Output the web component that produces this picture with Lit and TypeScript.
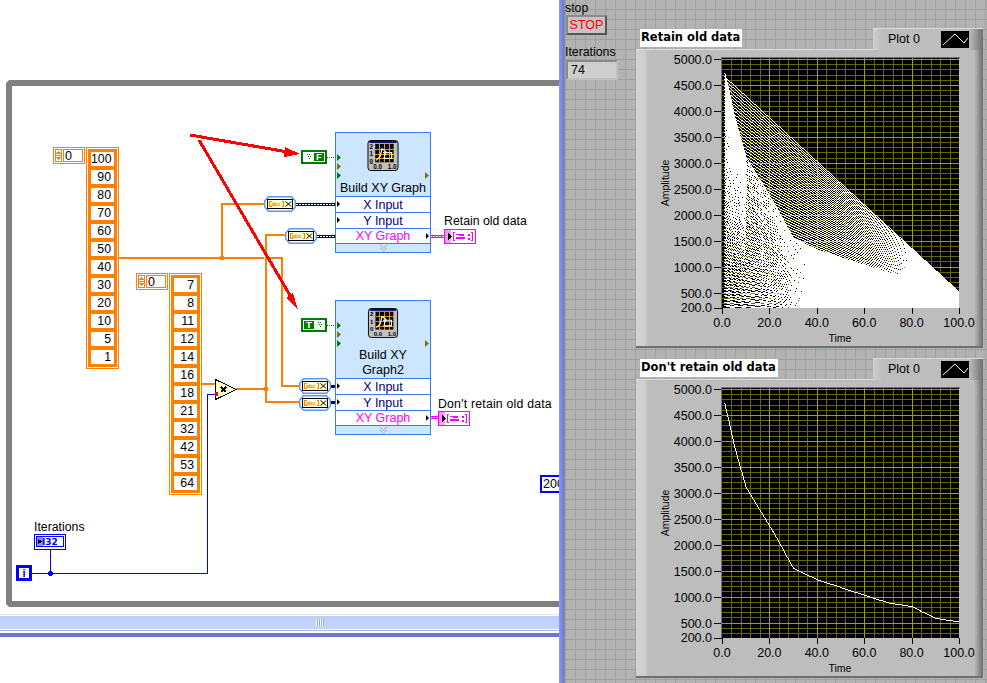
import { LitElement, css, html, svg } from 'lit'
import { customElement, property } from 'lit/decorators.js'

const TIMES = [100, 90, 80, 70, 60, 50, 40, 30, 20, 10, 5, 1]
const FACTORS = [7, 8, 11, 12, 14, 16, 18, 21, 32, 42, 53, 64]
const ITERATIONS = 74
const PLOT_W = 237
const PLOT_H = 250

// y axis runs 5000..200
const px = (x: number) => x * 2.37
const py = (y: number) => 1 + (5000 - y) * 0.0519

const iterationPoints = (i: number) =>
  TIMES.map((t, n): [number, number] => [px(t), py(FACTORS[n] * i)])

// the graph draws aliased one pixel lines, so rasterise them the same way
// and hand over the result as horizontal runs
const rasterTrace = (points: [number, number][]) => {
  const bits = new Uint8Array(PLOT_W * PLOT_H)
  const plot = (x: number, y: number) => {
    if (x >= 0 && x < PLOT_W && y >= 0 && y < PLOT_H) bits[y * PLOT_W + x] = 1
  }
  for (let p = 1; p < points.length; p++) {
    const [x0, y0] = points[p - 1]
    const [x1, y1] = points[p]
    const steps = Math.ceil(Math.max(Math.abs(x1 - x0), Math.abs(y1 - y0))) || 1
    for (let s = 0; s <= steps; s++) {
      plot(Math.round(x0 + (x1 - x0) * s / steps), Math.round(y0 + (y1 - y0) * s / steps))
    }
  }
  let d = ''
  for (let y = 0; y < PLOT_H; y++) {
    let x = 0
    while (x < PLOT_W) {
      if (!bits[y * PLOT_W + x]) { x++; continue }
      const start = x
      while (x < PLOT_W && bits[y * PLOT_W + x]) x++
      d += `M${start} ${y}.5h${x - start}`
    }
  }
  return d
}

const retainedTrace = () => {
  let points: [number, number][] = []
  for (let i = 0; i <= ITERATIONS; i++) points = points.concat(iterationPoints(i))
  return rasterTrace(points)
}

@customElement('array-const')
class ArrayConst extends LitElement {
  @property({ type: Array }) values: number[] = []

  static styles = css`
    :host {
      display: flex;
      align-items: flex-start;
      gap: 1px;
    }
    .index {
      box-sizing: border-box;
      width: 32px;
      height: 17px;
      border: 1px solid #ff8000;
      padding: 1px;
      display: flex;
      background: #fff;
    }
    .spin {
      display: block;
      width: 7px;
      height: 13px;
    }
    .value {
      flex: 1;
      border: 1px solid #ff8000;
      margin-left: 1px;
      font-size: 12.5px;
      line-height: 12px;
      padding-left: 1px;
    }
    .array {
      box-sizing: border-box;
      width: 33px;
      border: 1px solid #ff8000;
      padding: 1px;
      background: #fff;
    }
    .inner {
      background: #ff8000;
      padding: 3px;
      display: flex;
      flex-direction: column;
      gap: 4px;
    }
    .cell {
      height: 14px;
      line-height: 15px;
      background: #fff;
      text-align: right;
      padding-right: 3px;
      font-size: 12.3px;
    }
  `

  render () {
    return html`
      <div class="index">
        <svg class="spin" viewBox="0 0 7 13" shape-rendering="crispEdges">
          <rect x="0" y="0" width="7" height="13" fill="#ff8000"/>
          <rect x="1" y="1" width="5" height="11" fill="#fff"/>
          <path d="M3 2h1v1h1v1h1v1H1V4h1V3h1zM1 8h5v1H5v1H4v1H3v-1H2V9H1z" fill="#ff8000"/>
          <rect x="1" y="6" width="5" height="1" fill="#ff8000"/>
        </svg>
        <div class="value">0</div>
      </div>
      <div class="array">
        <div class="inner">
          ${this.values.map(v => html`<div class="cell">${v}</div>`)}
        </div>
      </div>
    `
  }
}

@customElement('express-vi')
class ExpressVi extends LitElement {
  @property({ type: Array }) titleLines: string[] = []
  @property({ type: Number }) headHeight = 64

  static styles = css`
    :host {
      display: block;
      box-sizing: border-box;
      width: 96px;
      border: 1px solid #3c78f0;
      background: #cce6ff;
      position: relative;
    }
    .head {
      box-sizing: border-box;
      padding-top: 7px;
      display: flex;
      flex-direction: column;
      align-items: center;
    }
    .icon {
      display: block;
      width: 32px;
      height: 32px;
      margin-bottom: 10px;
    }
    .title {
      font-size: 12.5px;
      line-height: 15px;
      text-align: center;
      color: #000;
    }
    .term {
      position: absolute;
      left: 1px;
      width: 4px;
      height: 7px;
      clip-path: polygon(0 0, 100% 50%, 0 100%);
      background: #007a00;
    }
    .term.olive {
      background: #807000;
    }
    .term.out {
      left: auto;
      right: 1px;
    }
    .row {
      box-sizing: border-box;
      height: 16px;
      line-height: 16px;
      border-top: 1px solid #3c78f0;
      background: #fff;
      text-align: center;
      font-size: 12.5px;
      color: #000080;
      position: relative;
    }
    .row.graph {
      height: 15px;
      line-height: 15px;
      color: #ff00ff;
    }
    .row::after {
      content: '';
      position: absolute;
      left: 1px;
      top: 4px;
      width: 3px;
      height: 6px;
      background: #000;
      clip-path: polygon(0 0, 100% 50%, 0 100%);
    }
    .row.graph::after {
      left: auto;
      right: 1px;
    }
    .more {
      height: 8px;
      border-top: 1px solid #3c78f0;
      display: flex;
      justify-content: center;
    }
    .more svg {
      display: block;
      width: 9px;
      height: 8px;
    }
  `

  icon () {
    const grid = [12, 17, 22]
    return html`
      <svg class="icon" viewBox="0 0 32 32">
        <rect x="0.5" y="0.5" width="31" height="31" rx="3" fill="#c0c0c0" stroke="#000"/>
        <path d="M2 1H30V3H2z" fill="#000080"/>
        <rect x="8" y="4" width="19" height="19" fill="#000"/>
        ${grid.map(g => svg`
          <path d="M${g}.5 4V23M8 ${g - 3}.5H27" stroke="#f0a000" shape-rendering="crispEdges"/>
        `)}
        <path d="M9 21L13 17L15 9L19 12L17 19H25V13L16 13" fill="none" stroke="#fff" stroke-width="1.2"/>
        <g font-size="6.5" font-weight="700" fill="#000">
          <text x="2" y="9">2</text>
          <text x="2" y="17">1</text>
          <text x="2" y="25">0</text>
          <text x="6" y="30">0.0</text>
          <text x="21" y="30">1.0</text>
        </g>
      </svg>
    `
  }

  render () {
    // terminal rows sit straight under the icon, output lines up with the last
    const top = 21
    return html`
      <div class="head" style="height:${this.headHeight - 1}px">
        ${this.icon()}
        ${this.titleLines.map(l => html`<div class="title">${l}</div>`)}
      </div>
      <span class="term" style="top:${top}px"></span>
      <span class="term olive" style="top:${top + 9}px"></span>
      <span class="term" style="top:${top + 18}px"></span>
      <span class="term olive out" style="top:${top + 18}px"></span>
      <div class="row">X Input</div>
      <div class="row">Y Input</div>
      <div class="row graph">XY Graph</div>
      <div class="more">
        <svg viewBox="0 0 9 8">
          <path d="M1 1L4.5 4L8 1M1 4L4.5 7L8 4" fill="none" stroke="#a8a8b8"/>
        </svg>
      </div>
    `
  }
}

@customElement('xy-graph')
class XyGraph extends LitElement {
  @property() label = ''
  @property() trace = ''

  static styles = css`
    :host {
      display: block;
      width: 347px;
    }
    .top {
      display: flex;
      justify-content: space-between;
      height: 21px;
      position: relative;
      z-index: 1;
    }
    .label {
      margin: 1px 0 0 4px;
      height: 18px;
      padding: 0 2px 0 1px;
      background: #fff;
      font-family: 'DejaVu Sans', sans-serif;
      font-weight: 700;
      font-size: 11.5px;
      line-height: 17px;
      color: #000;
    }
    .legend {
      box-sizing: border-box;
      width: 110px;
      height: 22px;
      display: flex;
      align-items: center;
      padding: 0 14px 0 15px;
      justify-content: space-between;
      font-size: 12.5px;
      background: linear-gradient(to right, #d0d0d0, #bdbdbd 10px, #bdbdbd 96px, #707070);
      box-shadow: inset 0 1px 0 #dadada;
    }
    .swatch {
      display: block;
      width: 28px;
      height: 17px;
      background: #000;
    }
    .panel {
      height: 299px;
      background: linear-gradient(to right, #d2d2d2, #d0d0d0 8px, #bdbdbd 12px, #bdbdbd 338px, #6c6c6c);
      box-shadow: inset 0 1px 0 #dcdcdc, inset 0 -2px 0 #6f6f6f;
    }
    .chart {
      display: block;
      width: 347px;
      height: 299px;
    }
    .chart text {
      font-size: 12.5px;
      fill: #000;
    }
    .chart text.axis {
      font-size: 10.5px;
    }
    .crisp {
      shape-rendering: crispEdges;
    }
  `

  chart () {
    const yMajor = [5000, 4500, 4000, 3500, 3000, 2500, 2000, 1500, 1000, 500]
    const yMinor = Array.from({ length: 49 }, (_, i) => 200 + i * 100)
    const xMajor = [0, 20, 40, 60, 80, 100]
    const xMinor = Array.from({ length: 25 }, (_, i) => (i + 1) * 4)
    const rowY = (v: number) => Math.round(py(v)) + 0.5
    const colX = (v: number) => Math.round(px(v)) + 0.5
    return html`
      <svg class="chart" viewBox="0 0 347 299">
        <g class="crisp" stroke="#000">
          ${[...yMajor, 200].map(v => svg`<path d="M78 ${rowY(v) + 9}H86"/>`)}
          ${xMajor.map(v => svg`<path d="M${colX(v) + 86} 259V265"/>`)}
        </g>
        ${yMajor.map(v => svg`
          <text x="76" y=${rowY(v) + 13.5} text-anchor="end">${v.toFixed(1)}</text>
        `)}
        <text x="76" y="263" text-anchor="end">200.0</text>
        ${xMajor.map(v => svg`
          <text x=${px(v) + 86} y="277.5" text-anchor="middle">${v.toFixed(1)}</text>
        `)}
        <text class="axis" x="204" y="293" text-anchor="middle">Time</text>
        <text class="axis" transform="translate(33 134) rotate(-90)" text-anchor="middle">Amplitude</text>
        <path class="crisp" d="M85.5 259V8.5H324" fill="none" stroke="#707070"/>
        <svg x="86" y="9" width=${PLOT_W} height=${PLOT_H} viewBox="0 0 ${PLOT_W} ${PLOT_H}">
          <rect width=${PLOT_W} height=${PLOT_H} fill="#000"/>
          <g class="crisp" stroke="#666600">
            ${yMinor.map(v => svg`<path d="M0 ${rowY(v)}H${PLOT_W}"/>`)}
            ${xMinor.map(v => svg`<path d="M${colX(v)} 0V${PLOT_H}"/>`)}
          </g>
          <g class="crisp" stroke="#a0a000">
            ${yMajor.map(v => svg`<path d="M0 ${rowY(v)}H${PLOT_W}"/>`)}
            ${xMajor.slice(1).map(v => svg`<path d="M${colX(v)} 0V${PLOT_H}"/>`)}
          </g>
          <path class="crisp" d=${this.trace} fill="none" stroke="#fff"/>
        </svg>
      </svg>
    `
  }

  render () {
    return html`
      <div class="top">
        <div class="label">${this.label}</div>
        <div class="legend">
          <span>Plot 0</span>
          <svg class="swatch" viewBox="0 0 28 17">
            <polyline points="2,14 14,3 23,12 27,7" fill="none" stroke="#fff"/>
          </svg>
        </div>
      </div>
      <div class="panel">${this.chart()}</div>
    `
  }
}

@customElement('app-root')
class AppRoot extends LitElement {
  static styles = css`
    :host {
      display: flex;
      width: 987px;
      height: 683px;
      overflow: hidden;
      background: #fff;
      font-family: 'Liberation Sans', Arial, sans-serif;
      color: #000;
    }

    /* block diagram */
    .left {
      width: 559px;
      display: flex;
      flex-direction: column;
    }
    .canvas {
      height: 614px;
      position: relative;
      overflow: hidden;
    }
    .canvas > * {
      position: absolute;
    }
    .loop {
      box-sizing: border-box;
      left: 6px;
      top: 80px;
      width: 600px;
      height: 527px;
      border: 6px solid #808080;
      clip-path: polygon(3px 0, 100% 0, 100% 100%, 3px 100%, 0 calc(100% - 3px), 0 3px);
    }
    .layer {
      left: 0;
      top: 0;
      width: 559px;
      height: 614px;
      shape-rendering: crispEdges;
    }
    .arrows {
      pointer-events: none;
    }
    .times-arr { left: 53px; top: 147px; }
    .amps-arr { left: 136px; top: 273px; }
    .vi-retain { left: 335px; top: 132px; }
    .vi-clear { left: 335px; top: 300px; }
    .conv { width: 32px; height: 16px; display: block; }
    .conv-a { left: 264px; top: 196px; }
    .conv-b { left: 285px; top: 228px; }
    .conv-c { left: 299px; top: 378px; }
    .conv-d { left: 299px; top: 395px; }
    .bool { width: 26px; height: 14px; display: block; }
    .bool-f { left: 301px; top: 150px; }
    .bool-t { left: 301px; top: 318px; }
    .ind { width: 32px; height: 15px; display: block; }
    .ind-a { left: 444px; top: 229px; }
    .ind-b { left: 438px; top: 411px; }
    .text {
      font-size: 12.3px;
      line-height: 15px;
      white-space: nowrap;
    }
    .lbl-retain { left: 444px; top: 214px; }
    .lbl-clear { left: 438px; top: 397px; letter-spacing: 0.2px; }
    .lbl-iter { left: 34px; top: 520px; }
    .i32 { left: 34px; top: 534px; width: 32px; height: 16px; display: block; }
    .iter-term {
      box-sizing: border-box;
      left: 16px;
      top: 565px;
      width: 16px;
      height: 16px;
      border: 3px solid #0000ff;
      background: #ffffcc;
      color: #0000ff;
      font-weight: 700;
      font-size: 11px;
      line-height: 10px;
      text-align: center;
    }
    .const-200 {
      box-sizing: border-box;
      left: 540px;
      top: 475px;
      width: 34px;
      height: 18px;
      border: 2px solid #0000ff;
      background: #fff;
      font-size: 12.5px;
      line-height: 15px;
      padding-left: 1px;
    }
    .scroll {
      height: 23px;
      flex: none;
      display: flex;
      justify-content: center;
      padding: 5px 0 0 81px;
      box-sizing: border-box;
      background: linear-gradient(to bottom,
        #ece9d8 0 1px, #fff 1px 2px,
        #bccffa 2px, #c4d6fd 15px,
        #fff 15px 16px, #a9bcdc 16px 17px, #fff 17px 19px,
        #6a77d0 19px 23px);
    }
    .grip {
      width: 8px;
      height: 7px;
      background: repeating-linear-gradient(to right, #fff 0 1px, #8fa8d8 1px 2px);
    }

    .split {
      width: 5px;
      flex: none;
      background: linear-gradient(to right, #8a9af0, #6a7bd8);
      border-right: 1px solid #8c8c8c;
    }

    /* front panel */
    .right {
      flex: 1;
      display: flex;
      background-color: #b2b2b2;
      background-image:
        linear-gradient(to right, #a0a0a0 1px, transparent 1px),
        linear-gradient(to bottom, #a0a0a0 1px, transparent 1px);
      background-size: 10px 10px;
      background-position: 0 9px;
    }
    .controls {
      width: 71px;
      flex: none;
      padding-left: 1px;
      box-sizing: border-box;
    }
    .stop {
      box-sizing: border-box;
      width: 41px;
      height: 20px;
      border: 2px solid;
      border-color: #8a8a8a #555 #555 #8a8a8a;
      background: #c4c4c4;
      color: #ff0000;
      font-size: 12.5px;
      line-height: 16px;
      text-align: center;
      margin-bottom: 10px;
    }
    .numeric {
      box-sizing: border-box;
      width: 52px;
      height: 20px;
      border-top: 2px solid #8a8a8a;
      border-left: 2px solid #8a8a8a;
      border-right: 2px solid #bfbfbf;
      border-bottom: 2px solid #bfbfbf;
      background: #cfcfcf;
      font-size: 12.5px;
      line-height: 16px;
      padding-left: 3px;
    }
    .ctl-label {
      font-size: 12.3px;
      height: 15px;
      line-height: 15px;
      margin-left: -1px;
    }
    .ctl-label.first {
      line-height: 17px;
    }
    .graphs {
      padding-top: 28px;
      display: flex;
      flex-direction: column;
      gap: 10px;
    }
  `

  wires () {
    return html`
      <svg class="layer" viewBox="0 0 559 614">
        <g fill="none" stroke="#ff8000" stroke-width="2">
          <path d="M119 258H264M268 258H282V386H299"/>
          <path d="M222 258V204H265"/>
          <path d="M286 235H266V402H299"/>
          <path d="M236 389H266M202 384H215"/>
        </g>
        <circle cx="222" cy="258" r="2.5" fill="#ff8000"/>
        <circle cx="266" cy="389" r="2.5" fill="#ff8000"/>
        <g fill="none" stroke="#0000ff">
          <path d="M32 573.5H207.5V394.5H215"/>
          <path d="M50.5 549V573"/>
        </g>
        <circle cx="50.5" cy="573.5" r="2.5" fill="#0000ff"/>
        <g fill="none" stroke="#007a00" stroke-dasharray="1 1">
          <path d="M327 157.5H335M327 325.5H335"/>
        </g>
        <g fill="none" stroke="#000080" stroke-width="3">
          <path d="M296 204.5H335M317 236.5H335M330 386.5H335M330 402.5H335"/>
        </g>
        <g fill="none" stroke="#fff" stroke-dasharray="2 1">
          <path d="M296 204.5H335M317 236.5H335"/>
        </g>
        <path d="M430 236.5H444M430 417.5H438" fill="none" stroke="#ff00ff" stroke-width="3"/>
        <path d="M430 236.5H444M430 417.5H438" fill="none" stroke="#fff" stroke-dasharray="2 1"/>
        <path d="M215.5 379.5L236 389.5L215.5 399.5Z" fill="#ffffcc" stroke="#000"/>
        <path d="M221 387L226 392M226 387L221 392" stroke="#000" stroke-width="1.5"/>
        <rect x="215" y="392" width="3" height="4" fill="#ff0000"/>
      </svg>
    `
  }

  convertNode (cls: string) {
    return html`
      <svg class="conv ${cls}" viewBox="0 0 32 16">
        <path d="M4.5 0.7H27.5L31.3 5V11L27.5 15.3H4.5L0.7 11V5Z" fill="#fff" stroke="#5a96ff" stroke-width="1.4"/>
        <path d="M3.5 3.5H28.5V12.5H3.5Z" fill="#ffffd8" stroke="#000" shape-rendering="crispEdges"/>
        <path d="M7.5 5.5H5.5V10.5H7.5M17.5 5.5H19.5V10.5H17.5" fill="none" stroke="#ff8000" shape-rendering="crispEdges"/>
        <text x="7" y="10.2" font-size="5.6" font-weight="700" fill="#ff8000">abc</text>
        <path d="M21.5 5.5L24.5 8L21.5 10.5M27 5.5L24.5 8L27 10.5" fill="none" stroke="#000"/>
      </svg>
    `
  }

  boolConst (letter: string, cls: string, boxFirst: boolean) {
    const boxX = boxFirst ? 3 : 13
    const dotsX = boxFirst ? 17 : 6
    return html`
      <svg class="bool ${cls}" viewBox="0 0 26 14">
        <rect x="1" y="1" width="24" height="12" fill="#fff" stroke="#007a00" stroke-width="2"/>
        <rect x=${boxX} y="3" width="10" height="8" fill="#007a00"/>
        <text x=${boxX + 5} y="10.3" font-size="9.5" font-weight="700" fill="#fff" text-anchor="middle">${letter}</text>
        <path d="M${dotsX} 4.5h4M${dotsX + 1} 6.5h3M${dotsX + 2} 8.5h1" stroke="#007a00" stroke-dasharray="1 1"/>
      </svg>
    `
  }

  graphIndicator (cls: string) {
    return html`
      <svg class="ind ${cls}" viewBox="0 0 32 15" shape-rendering="crispEdges">
        <rect x="0.5" y="0.5" width="31" height="14" fill="#fff" stroke="#ff00ff"/>
        <rect x="1" y="1" width="6" height="13" fill="#ff99ff"/>
        <path d="M4 4L8 7.5L4 11Z" fill="#000"/>
        <path d="M10.5 11.5H9V3.5H10.5M27 3.5H28.5V11.5H27" fill="none" stroke="#ff00ff"/>
        <rect x="12" y="5" width="3" height="1" fill="#ff00ff"/>
        <rect x="12" y="8" width="9" height="2" fill="#ff00ff"/>
        <rect x="15" y="5" width="5" height="2" fill="#ff00ff"/>
        <rect x="24" y="5" width="2" height="2" fill="#ff00ff"/>
        <rect x="24" y="9" width="2" height="2" fill="#ff00ff"/>
      </svg>
    `
  }

  render () {
    return html`
      <div class="left">
        <div class="canvas">
          <div class="loop"></div>
          ${this.wires()}
          <array-const class="times-arr" .values=${TIMES}></array-const>
          <array-const class="amps-arr" .values=${FACTORS}></array-const>

          ${this.boolConst('F', 'bool-f', false)}
          ${this.boolConst('T', 'bool-t', true)}
          <express-vi class="vi-retain" .titleLines=${['Build XY Graph']} .headHeight=${64}></express-vi>
          <express-vi class="vi-clear" .titleLines=${['Build XY', 'Graph2']} .headHeight=${78}></express-vi>
          ${this.convertNode('conv-a')}
          ${this.convertNode('conv-b')}
          ${this.convertNode('conv-c')}
          ${this.convertNode('conv-d')}

          <div class="text lbl-retain">Retain old data</div>
          ${this.graphIndicator('ind-a')}
          <div class="text lbl-clear">Don't retain old data</div>
          ${this.graphIndicator('ind-b')}

          <div class="text lbl-iter">Iterations</div>
          <svg class="i32" viewBox="0 0 32 16" shape-rendering="crispEdges">
            <rect x="0.5" y="0.5" width="31" height="15" fill="#fff" stroke="#0000ff"/>
            <rect x="2.5" y="2.5" width="27" height="10" fill="#fff" stroke="#0000ff"/>
            <rect x="3" y="3" width="6" height="9" fill="#9090ff"/>
            <path d="M4 4.5L8 7.5L4 10.5Z" fill="#000"/>
            <text x="8" y="11.2" font-family="DejaVu Sans" font-size="9" font-weight="700" fill="#0000ff">I32</text>
          </svg>
          <div class="iter-term">i</div>
          <div class="const-200">200</div>

          <svg class="layer arrows" viewBox="0 0 559 614" fill="#ff0000">
            <path d="M190 135L288 152" stroke="#ff0000" stroke-width="3"/>
            <path d="M285 147L300 154L284 157Z"/>
            <path d="M199 140L291 297" stroke="#ff0000" stroke-width="3"/>
            <path d="M293 293L298 310L286 298Z"/>
          </svg>
        </div>
        <div class="scroll"><div class="grip"></div></div>
      </div>
      <div class="split"></div>
      <div class="right">
        <div class="controls">
          <div class="ctl-label first">stop</div>
          <div class="stop">STOP</div>
          <div class="ctl-label">Iterations</div>
          <div class="numeric">${ITERATIONS}</div>
        </div>
        <div class="graphs">
          <xy-graph label="Retain old data" .trace=${retainedTrace()}></xy-graph>
          <xy-graph label="Don't retain old data" .trace=${rasterTrace(iterationPoints(ITERATIONS))}></xy-graph>
        </div>
      </div>
    `
  }
}
